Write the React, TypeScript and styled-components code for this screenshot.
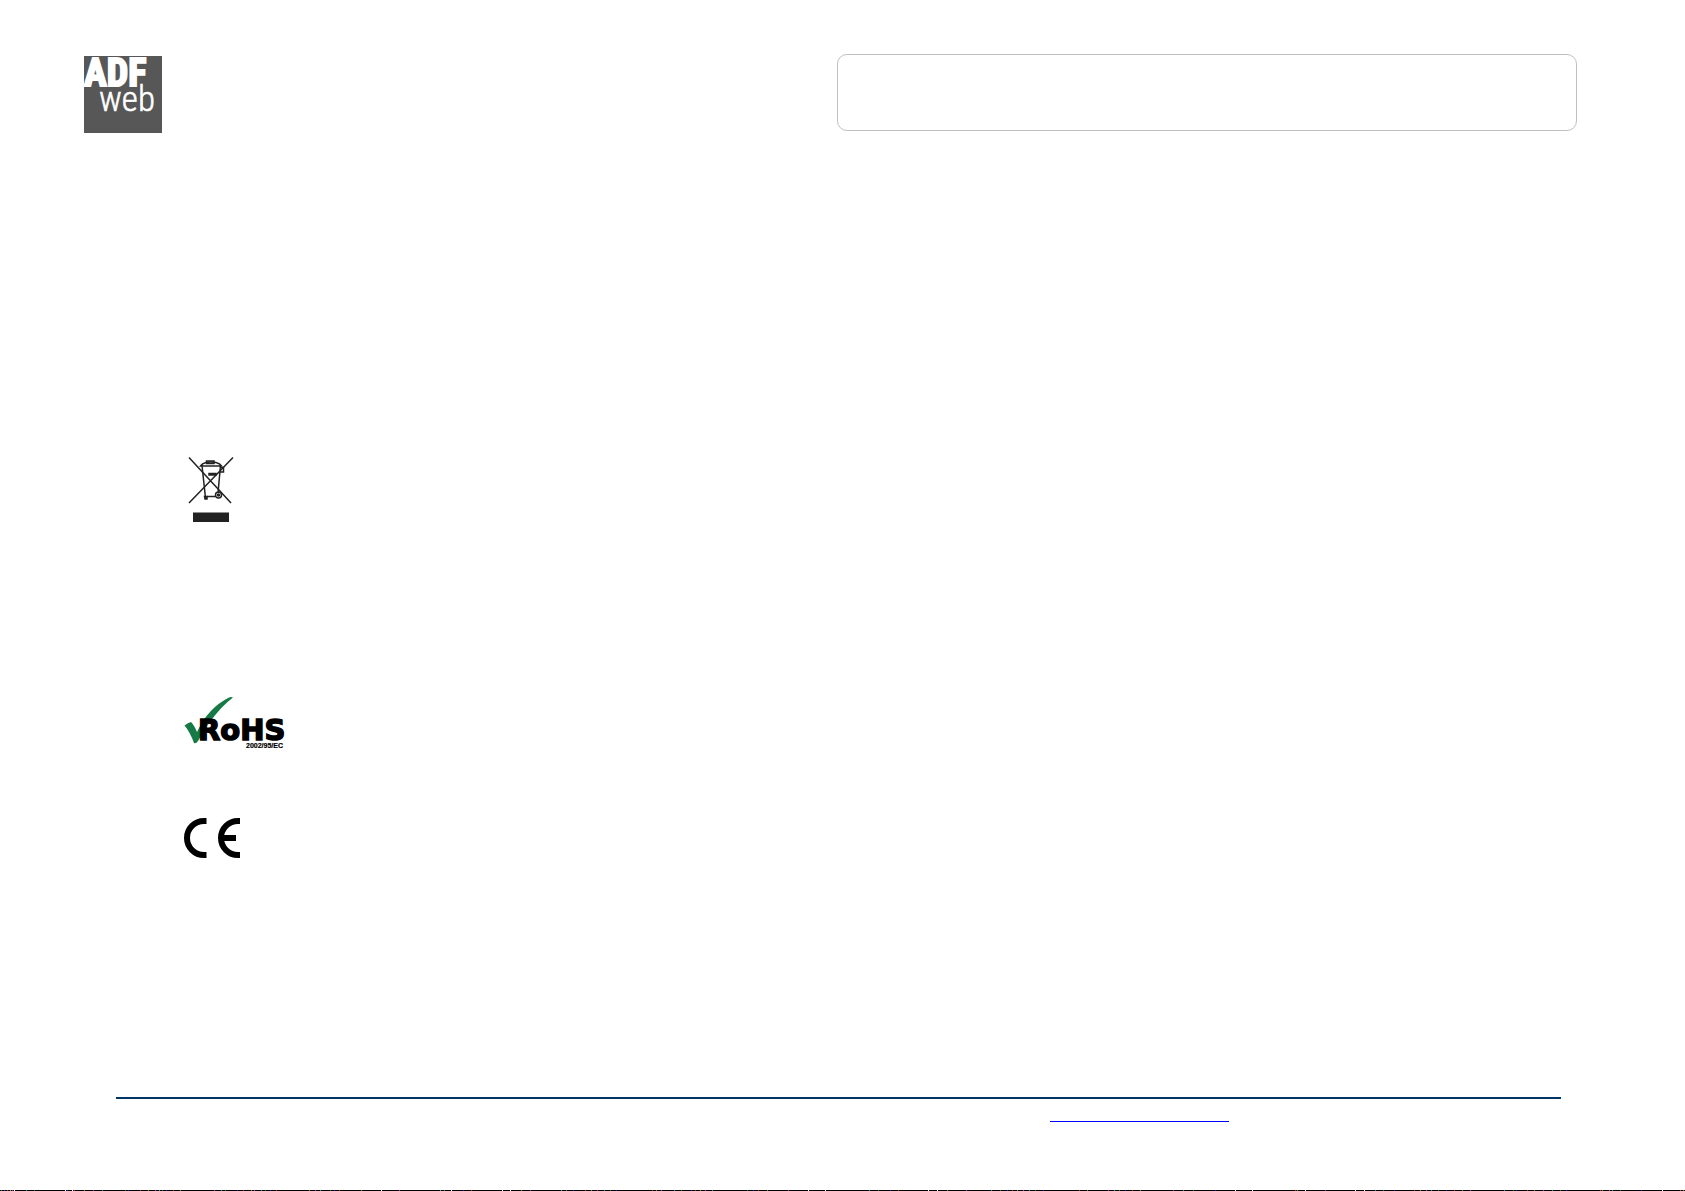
import React from "react";
import styled, { createGlobalStyle } from "styled-components";

const GlobalStyle = createGlobalStyle`
  * { box-sizing: border-box; }
  body { margin: 0; background: #fff; font-family: "Liberation Sans", Arial, sans-serif; }
`;

const Page = styled.div`
  min-height: 100vh;
  display: flex;
  flex-direction: column;
`;

const Header = styled.header`
  display: flex;
  justify-content: space-between;
  align-items: flex-start;
  padding: 54px 108px 0 84px;
`;

const TitleBox = styled.div`
  width: calc(50% - 6px);
  height: 77px;
  border: 1px solid #c0c0c0;
  border-radius: 10px;
`;

const LogoFrame = styled.div`
  padding-top: 2px;
`;

const Drawing = styled.svg`
  display: block;
  overflow: visible;
`;

const Main = styled.main`
  flex: 1;
  display: flex;
  flex-direction: column;
  align-items: flex-start;
  padding: 324px 184px 0;
`;

const Mark = styled.div<{ $after: number }>`
  margin-bottom: ${(p) => p.$after}px;
`;

const Footer = styled.footer`
  margin: 0 124px 0 116px;
  border-top: 2px solid #003366;
  height: 93px;
  display: flex;
  justify-content: flex-end;
`;

const SiteLink = styled.a`
  width: 179px;
  height: 23px;
  margin-right: 332px;
  border-bottom: 1px solid #0000ff;
`;

const EdgeLine = styled.svg`
  display: block;
  width: 100%;
  height: 1px;
  background: #000;
`;

const gaps = [14, 65, 72, 381, 451, 502, 510, 808, 825, 928, 937, 1235, 1252, 1305, 1355, 1364, 1662];

const specks = [
  1, 4, 7, 10, 12, 26, 34, 67, 74, 84, 93, 102, 125, 128, 140, 148, 155, 159, 162, 166, 173, 180, 214, 221, 225,
  237, 243, 251, 254, 261, 265, 270, 276, 309, 315, 320, 330, 334, 339, 361, 399, 440, 444, 463, 471, 521, 530,
  561, 566, 573, 585, 591, 597, 604, 610, 616, 652, 656, 661, 674, 681, 691, 695, 700, 705, 712, 747, 753, 758,
  767, 788, 869, 878, 890, 898, 947, 966, 991, 1000, 1007, 1012, 1017, 1023, 1029, 1035, 1043, 1079, 1087, 1108,
  1114, 1119, 1125, 1132, 1140, 1173, 1183, 1193, 1215, 1295, 1297, 1325, 1375, 1383, 1394, 1414, 1420, 1426,
  1431, 1438, 1446, 1454, 1462, 1470, 1504, 1513, 1516, 1527, 1534, 1543, 1552, 1560, 1566, 1600, 1602, 1609,
  1612, 1620, 1641, 1680, 1683,
];

const speckColors = ["#2a7a3a", "#2222cc", "#b03a2e", "#8a8a30", "#b03a9a", "#2a9a9a"];

const Edge = () => (
  <EdgeLine aria-hidden="true" shapeRendering="crispEdges">
    {specks.map((x, i) => (
      <rect key={x} x={x} width="1" height="1" fill={speckColors[i % speckColors.length]} />
    ))}
    {gaps.map((x) => (
      <rect key={x} x={x} width="1" height="1" fill="#fff" />
    ))}
  </EdgeLine>
);

const Logo = () => (
  <Drawing width="78" height="77" viewBox="0 0 78 77" role="img" aria-label="ADF web">
    <rect width="78" height="77" fill="#575757" />
    <g fill="#fff">
      <text x="0" y="30" fontSize="38" fontWeight="700" stroke="#fff" strokeWidth="2" fontFamily="'Roboto Condensed', Roboto, sans-serif">ADF</text>
      <text x="15" y="55" fontSize="35" fontWeight="300" stroke="#fff" strokeWidth="0.5" fontFamily="'Roboto Condensed', Roboto, sans-serif">web</text>
    </g>
  </Drawing>
);

const Weee = () => (
  <Drawing width="45" height="65" viewBox="0 0 45 65" role="img" aria-label="Separate collection">
    <g transform="translate(-4 -12)" fill="none" stroke="#222" strokeWidth="1.5">
      <path d="M9 12.5 51 58M53 12.5 9 58" />
      <path d="M22 20.5 25.5 53M40.5 20.5 38 48M27 51.5H35" />
      <path d="M20.5 21Q22 18.500 26 17.500Q31 16.500 36 17.500Q40 18.500 41.500 21Z" />
      <path d="M26.500 17V16H34V18.500H26.500Z" />
      <path d="M40.500 22.500H43.500V27H40" />
      <rect x="29" y="28.500" width="7" height="1.500" fill="#222" />
      <circle cx="38.500" cy="50" r="3" />
      <circle cx="38.500" cy="50" r="1" fill="#222" />
      <path d="M24.500 51.500H27V54H25Z" fill="#222" />
    </g>
    <rect x="9" y="55.500" width="36" height="9.500" fill="#222" />
  </Drawing>
);

const Rohs = () => (
  <Drawing width="104" height="51" viewBox="0 0 104 51" role="img" aria-label="RoHS 2002/95/EC">
    <path
      d="M0.500 28.500Q4 25.500 7 25Q10 28 13 35Q24 11 45 0.500Q47 -0.500 49 0.500Q30 15 14 44Q12 47 10 46Q6 35 0.500 28.500Z"
      fill="#157a45"
    />
    <text x="14" y="43" fontSize="29" fontWeight="700" stroke="#000" strokeWidth="1.5" fontFamily="'DejaVu Sans', sans-serif">RoHS</text>
    <text x="62" y="51" fontSize="7" fontWeight="700" stroke="#000" strokeWidth="0.2" fontFamily="'Liberation Sans', sans-serif">2002/95/EC</text>
  </Drawing>
);

const Ce = () => (
  <Drawing width="56" height="40" viewBox="0 0 56 40" role="img" aria-label="CE">
    <g fill="none" stroke="#000" strokeWidth="6">
      <path d="M22.500 3H20A17 17 0 0 0 20 37H22.500" />
      <path d="M56 3H54A17 17 0 0 0 54 37H56M38 20H52" />
    </g>
  </Drawing>
);

export default function App() {
  return (
    <Page>
      <GlobalStyle />
      <Header>
        <LogoFrame><Logo /></LogoFrame>
        <TitleBox />
      </Header>
      <Main>
        <Mark $after={175}><Weee /></Mark>
        <Mark $after={70}><Rohs /></Mark>
        <Mark $after={0}><Ce /></Mark>
      </Main>
      <Footer>
        <SiteLink href="#" aria-label="Website" />
      </Footer>
      <Edge />
    </Page>
  );
}
